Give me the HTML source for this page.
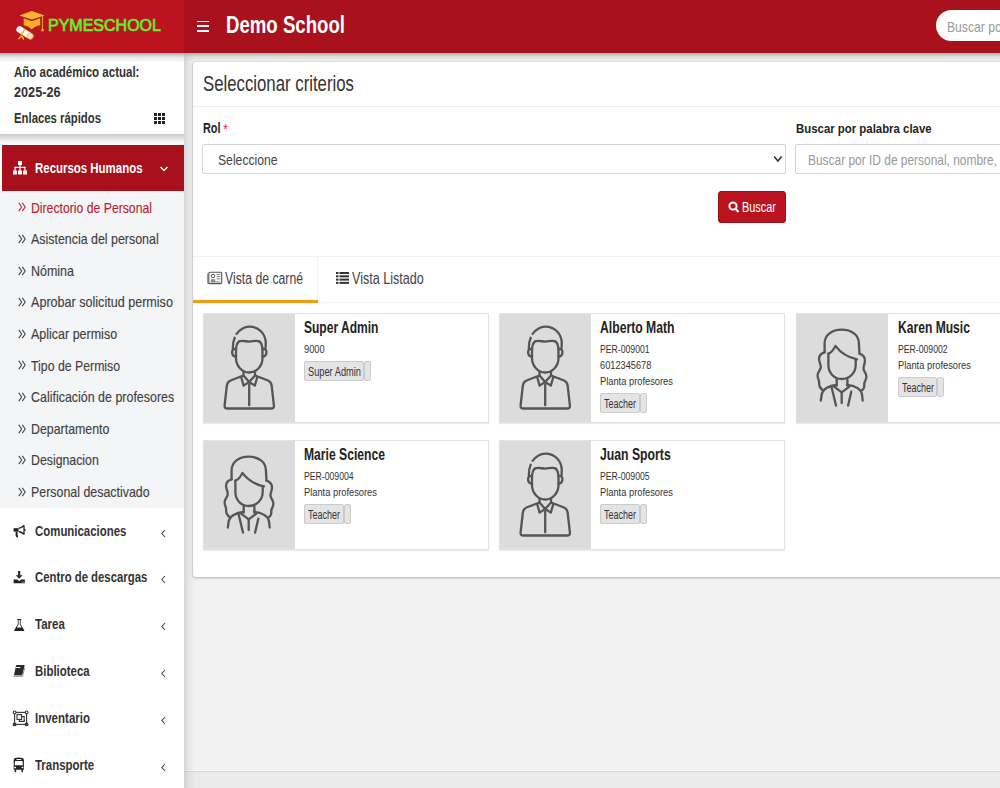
<!DOCTYPE html>
<html><head><meta charset="utf-8"><style>
html,body{margin:0;padding:0;width:1000px;height:788px;overflow:hidden;background:#f1f1f1;position:relative;font-family:"Liberation Sans",sans-serif}
.t{position:absolute;white-space:nowrap;transform-origin:0 50%}
</style></head><body>
<div style="position:absolute;left:0;top:0;width:184px;height:53px;background:#bb1420"></div>
<div style="position:absolute;left:184px;top:0;width:816px;height:53px;background:#a9111c"></div>
<div style="position:absolute;left:0;top:53px;width:1000px;height:9px;z-index:5;background:linear-gradient(rgba(150,155,155,.75),rgba(190,190,190,.35) 45%,rgba(240,240,240,0))"></div>
<div class="t" style="left:48.3px;top:16.9px;font-size:17.4px;line-height:17.4px;color:#5ff22b;transform:scaleX(0.9202);-webkit-text-stroke:0.7px #5ff22b;">PYMESCHOOL</div>
<svg style="position:absolute;left:12px;top:6px" width="40" height="40" viewBox="0 0 40 40">
<path d="M11.7,12.2 L19.8,15.2 L28.2,12.2 L28.2,19.3 C25,19.8 21.5,21.3 19.8,23.4 C18,21.3 14.5,19.8 11.7,19.3 Z" fill="#f6b024"/>
<polygon points="7.2,9.4 19.8,5 32.6,9.4 19.8,13.6" fill="#f8b82c"/>
<line x1="30.5" y1="9.8" x2="30.5" y2="21.8" stroke="#e8a030" stroke-width="1"/>
<path d="M28.9,25.2 L30.5,20.8 L32.1,25.2 Z" fill="#f8b82c"/>
<g transform="rotate(32 12.5 26.5)">
<rect x="3.5" y="23.2" width="17.5" height="6.6" rx="3.3" fill="#fffaf0"/>
<circle cx="19.3" cy="26.5" r="3" fill="#fbe6bd" stroke="#f0b040" stroke-width="0.8"/>
<rect x="10.2" y="23" width="1.6" height="7" fill="#f6b024"/>
</g>
<path d="M9.2,30 L6.8,32.8 M9.8,30.2 L11.5,33" stroke="#f6b024" stroke-width="1.5" stroke-linecap="round"/>
</svg>
<div style="position:absolute;left:197px;top:20.6px;width:12px;height:1.8px;background:#fff"></div>
<div style="position:absolute;left:197px;top:25.4px;width:12px;height:1.8px;background:#fff"></div>
<div style="position:absolute;left:197px;top:30.2px;width:12px;height:1.8px;background:#fff"></div>
<div class="t" style="left:225.5px;top:14.4px;font-size:23px;line-height:23px;color:#fff;font-weight:bold;transform:scaleX(0.8097);">Demo School</div>
<div style="position:absolute;left:936px;top:10px;width:120px;height:31px;border-radius:16px;background:#fff"></div>
<div class="t" style="left:947.3px;top:18.6px;font-size:15px;line-height:15px;color:#999;transform:scaleX(0.8097);">Buscar por</div>
<div style="position:absolute;left:0;top:53px;width:184px;height:735px;background:#fff"></div>
<div style="position:absolute;left:0;top:134px;width:184px;height:11px;background:#f7f8f9"></div>
<div style="position:absolute;left:0;top:134px;width:184px;height:8px;background:linear-gradient(#c9c9c9,rgba(247,248,249,0))"></div>
<div class="t" style="left:14.0px;top:64.9px;font-size:14.6px;line-height:14.6px;color:#333;font-weight:bold;transform:scaleX(0.7892);">Año académico actual:</div>
<div class="t" style="left:14.0px;top:84.9px;font-size:14.6px;line-height:14.6px;color:#333;font-weight:bold;transform:scaleX(0.8678);">2025-26</div>
<div class="t" style="left:14.0px;top:111.0px;font-size:14.6px;line-height:14.6px;color:#333;font-weight:bold;transform:scaleX(0.7769);">Enlaces rápidos</div>
<div style="position:absolute;left:153.5px;top:113.0px;width:3.4px;height:3.2px;background:#222"></div>
<div style="position:absolute;left:153.5px;top:117.0px;width:3.4px;height:3.2px;background:#222"></div>
<div style="position:absolute;left:153.5px;top:121.0px;width:3.4px;height:3.2px;background:#222"></div>
<div style="position:absolute;left:157.8px;top:113.0px;width:3.4px;height:3.2px;background:#222"></div>
<div style="position:absolute;left:157.8px;top:117.0px;width:3.4px;height:3.2px;background:#222"></div>
<div style="position:absolute;left:157.8px;top:121.0px;width:3.4px;height:3.2px;background:#222"></div>
<div style="position:absolute;left:162.1px;top:113.0px;width:3.4px;height:3.2px;background:#222"></div>
<div style="position:absolute;left:162.1px;top:117.0px;width:3.4px;height:3.2px;background:#222"></div>
<div style="position:absolute;left:162.1px;top:121.0px;width:3.4px;height:3.2px;background:#222"></div>
<div style="position:absolute;left:2px;top:145px;width:182px;height:45.5px;background:#a8101c"></div>
<svg style="position:absolute;left:13px;top:161px" width="14" height="14" viewBox="0 0 14 14" fill="#fff">
<rect x="5" y="0" width="4" height="4"/><rect x="6.4" y="3.5" width="1.2" height="3"/><rect x="1.5" y="5.8" width="11" height="1.2"/>
<rect x="1.5" y="5.8" width="1.2" height="4"/><rect x="11.3" y="5.8" width="1.2" height="4"/><rect x="6.4" y="5.8" width="1.2" height="4"/>
<rect x="0" y="9.5" width="4" height="4"/><rect x="5" y="9.5" width="4" height="4"/><rect x="10" y="9.5" width="4" height="4"/></svg>
<div class="t" style="left:35.0px;top:161.3px;font-size:14.5px;line-height:14.5px;color:#fff;font-weight:bold;transform:scaleX(0.7894);">Recursos Humanos</div>
<svg style="position:absolute;left:159px;top:165px" width="10" height="8" viewBox="0 0 10 8"><path d="M1.5,2 L5,5.5 L8.5,2" stroke="#fff" stroke-width="1.5" fill="none"/></svg>
<div style="position:absolute;left:0;top:190.5px;width:184px;height:317.5px;background:#f4f5f7"></div>
<svg style="position:absolute;left:18px;top:202.3px" width="8" height="10" viewBox="0 0 8 10"><path d="M0.8,0.9 L3.7,5 L0.8,9.1 M4.3,0.9 L7.2,5 L4.3,9.1" stroke="#b91e2d" stroke-width="1.05" fill="none"/></svg>
<div class="t" style="left:31.4px;top:199.6px;font-size:15px;line-height:15px;color:#b91e2d;transform:scaleX(0.8153);-webkit-text-stroke:0.15px #b91e2d;">Directorio de Personal</div>
<svg style="position:absolute;left:18px;top:233.9px" width="8" height="10" viewBox="0 0 8 10"><path d="M0.8,0.9 L3.7,5 L0.8,9.1 M4.3,0.9 L7.2,5 L4.3,9.1" stroke="#3f3f3f" stroke-width="1.05" fill="none"/></svg>
<div class="t" style="left:31.4px;top:231.2px;font-size:15px;line-height:15px;color:#3f3f3f;transform:scaleX(0.8278);-webkit-text-stroke:0.15px #3f3f3f;">Asistencia del personal</div>
<svg style="position:absolute;left:18px;top:265.5px" width="8" height="10" viewBox="0 0 8 10"><path d="M0.8,0.9 L3.7,5 L0.8,9.1 M4.3,0.9 L7.2,5 L4.3,9.1" stroke="#3f3f3f" stroke-width="1.05" fill="none"/></svg>
<div class="t" style="left:31.4px;top:262.8px;font-size:15px;line-height:15px;color:#3f3f3f;transform:scaleX(0.8300);-webkit-text-stroke:0.15px #3f3f3f;">Nómina</div>
<svg style="position:absolute;left:18px;top:297.1px" width="8" height="10" viewBox="0 0 8 10"><path d="M0.8,0.9 L3.7,5 L0.8,9.1 M4.3,0.9 L7.2,5 L4.3,9.1" stroke="#3f3f3f" stroke-width="1.05" fill="none"/></svg>
<div class="t" style="left:31.4px;top:294.4px;font-size:15px;line-height:15px;color:#3f3f3f;transform:scaleX(0.8384);-webkit-text-stroke:0.15px #3f3f3f;">Aprobar solicitud permiso</div>
<svg style="position:absolute;left:18px;top:328.7px" width="8" height="10" viewBox="0 0 8 10"><path d="M0.8,0.9 L3.7,5 L0.8,9.1 M4.3,0.9 L7.2,5 L4.3,9.1" stroke="#3f3f3f" stroke-width="1.05" fill="none"/></svg>
<div class="t" style="left:31.4px;top:326.0px;font-size:15px;line-height:15px;color:#3f3f3f;transform:scaleX(0.8329);-webkit-text-stroke:0.15px #3f3f3f;">Aplicar permiso</div>
<svg style="position:absolute;left:18px;top:360.3px" width="8" height="10" viewBox="0 0 8 10"><path d="M0.8,0.9 L3.7,5 L0.8,9.1 M4.3,0.9 L7.2,5 L4.3,9.1" stroke="#3f3f3f" stroke-width="1.05" fill="none"/></svg>
<div class="t" style="left:31.4px;top:357.6px;font-size:15px;line-height:15px;color:#3f3f3f;transform:scaleX(0.8200);-webkit-text-stroke:0.15px #3f3f3f;">Tipo de Permiso</div>
<svg style="position:absolute;left:18px;top:391.9px" width="8" height="10" viewBox="0 0 8 10"><path d="M0.8,0.9 L3.7,5 L0.8,9.1 M4.3,0.9 L7.2,5 L4.3,9.1" stroke="#3f3f3f" stroke-width="1.05" fill="none"/></svg>
<div class="t" style="left:31.4px;top:389.2px;font-size:15px;line-height:15px;color:#3f3f3f;transform:scaleX(0.8297);-webkit-text-stroke:0.15px #3f3f3f;">Calificación de profesores</div>
<svg style="position:absolute;left:18px;top:423.5px" width="8" height="10" viewBox="0 0 8 10"><path d="M0.8,0.9 L3.7,5 L0.8,9.1 M4.3,0.9 L7.2,5 L4.3,9.1" stroke="#3f3f3f" stroke-width="1.05" fill="none"/></svg>
<div class="t" style="left:31.4px;top:420.8px;font-size:15px;line-height:15px;color:#3f3f3f;transform:scaleX(0.8248);-webkit-text-stroke:0.15px #3f3f3f;">Departamento</div>
<svg style="position:absolute;left:18px;top:455.1px" width="8" height="10" viewBox="0 0 8 10"><path d="M0.8,0.9 L3.7,5 L0.8,9.1 M4.3,0.9 L7.2,5 L4.3,9.1" stroke="#3f3f3f" stroke-width="1.05" fill="none"/></svg>
<div class="t" style="left:31.4px;top:452.4px;font-size:15px;line-height:15px;color:#3f3f3f;transform:scaleX(0.8213);-webkit-text-stroke:0.15px #3f3f3f;">Designacion</div>
<svg style="position:absolute;left:18px;top:486.7px" width="8" height="10" viewBox="0 0 8 10"><path d="M0.8,0.9 L3.7,5 L0.8,9.1 M4.3,0.9 L7.2,5 L4.3,9.1" stroke="#3f3f3f" stroke-width="1.05" fill="none"/></svg>
<div class="t" style="left:31.4px;top:484.0px;font-size:15px;line-height:15px;color:#3f3f3f;transform:scaleX(0.8269);-webkit-text-stroke:0.15px #3f3f3f;">Personal desactivado</div>
<svg style="position:absolute;left:8px;top:518.9px" width="24" height="24" viewBox="0 0 24 24"><rect x="5.6" y="9.2" width="5" height="3.4" fill="#222"/><path d="M10.8,9.4 C13,9 14.5,8 16,6.6 L16,15.2 C14.5,13.8 13,12.9 10.8,12.5" stroke="#222" stroke-width="1.3" fill="none" stroke-linejoin="round"/><rect x="16.2" y="10" width="1.4" height="1.7" fill="#222"/><path d="M8.6,12.5 L8.6,16.4 C8.6,17.2 9.2,17.5 10,17.5" stroke="#222" stroke-width="2" fill="none"/></svg>
<div class="t" style="left:35.0px;top:523.6px;font-size:14.8px;line-height:14.8px;color:#333;font-weight:bold;transform:scaleX(0.7718);">Comunicaciones</div>
<svg style="position:absolute;left:160px;top:528.6px" width="7" height="9" viewBox="0 0 7 9"><path d="M5,1 L1.8,4.5 L5,8" stroke="#444" stroke-width="1.1" fill="none"/></svg>
<svg style="position:absolute;left:8px;top:565.7px" width="24" height="24" viewBox="0 0 24 24"><rect x="10.1" y="5" width="2.1" height="4.8" fill="#222"/><path d="M7.8,9.2 L14.6,9.2 L11.2,12.8 Z" fill="#222"/><path d="M5.6,13.4 L9.4,13.4 L11.2,15.2 L13,13.4 L16.8,13.4 L16.8,17.2 L5.6,17.2 Z" fill="#222"/><rect x="13.5" y="15.6" width="2.6" height="0.9" fill="#999"/></svg>
<div class="t" style="left:35.0px;top:570.4px;font-size:14.8px;line-height:14.8px;color:#333;font-weight:bold;transform:scaleX(0.7670);">Centro de descargas</div>
<svg style="position:absolute;left:160px;top:575.4px" width="7" height="9" viewBox="0 0 7 9"><path d="M5,1 L1.8,4.5 L5,8" stroke="#444" stroke-width="1.1" fill="none"/></svg>
<svg style="position:absolute;left:8px;top:612.5px" width="24" height="24" viewBox="0 0 24 24"><path fill-rule="evenodd" d="M9.2,5.9 L13.3,5.9 L13.3,7 L12.6,7 L12.6,11 L16.2,17.2 C16.5,17.8 16.1,18.1 15.5,18.1 L6.9,18.1 C6.3,18.1 5.9,17.8 6.2,17.2 L9.8,11 L9.8,7 L9.2,7 Z M10.6,7 L11.8,7 L11.8,11.3 L13.7,14.6 L8.7,14.6 L10.6,11.3 Z" fill="#222"/></svg>
<div class="t" style="left:35.0px;top:617.2px;font-size:14.8px;line-height:14.8px;color:#333;font-weight:bold;transform:scaleX(0.7761);">Tarea</div>
<svg style="position:absolute;left:160px;top:622.2px" width="7" height="9" viewBox="0 0 7 9"><path d="M5,1 L1.8,4.5 L5,8" stroke="#444" stroke-width="1.1" fill="none"/></svg>
<svg style="position:absolute;left:8px;top:659.3px" width="24" height="24" viewBox="0 0 24 24"><path d="M8.6,6 L16,6 C16.5,6 16.7,6.4 16.6,6.9 L14.3,16 L6,16 L8,6.8 C8.1,6.3 8.3,6 8.6,6 Z" fill="#2a2a2a"/><rect x="9.5" y="8" width="4.6" height="1.1" fill="#fff" transform="skewX(-12)" /><path d="M5.6,16.2 L14.3,16.2 L14,17.8 L5.8,17.8 C5.3,17.8 5.2,17.4 5.3,17 Z" fill="#888"/><path d="M16.6,9 L14.5,17.6" stroke="#999" stroke-width="1"/></svg>
<div class="t" style="left:35.0px;top:664.0px;font-size:14.8px;line-height:14.8px;color:#333;font-weight:bold;transform:scaleX(0.7734);">Biblioteca</div>
<svg style="position:absolute;left:160px;top:669.0px" width="7" height="9" viewBox="0 0 7 9"><path d="M5,1 L1.8,4.5 L5,8" stroke="#444" stroke-width="1.1" fill="none"/></svg>
<svg style="position:absolute;left:8px;top:706.1px" width="24" height="24" viewBox="0 0 24 24"><rect x="6.6" y="6.4" width="12" height="12" stroke="#333" stroke-width="1.1" fill="none"/><circle cx="6.6" cy="6.4" r="1.4" fill="#fff" stroke="#333" stroke-width="1.1"/><circle cx="18.6" cy="6.4" r="1.4" fill="#fff" stroke="#333" stroke-width="1.1"/><circle cx="6.6" cy="18.4" r="1.4" fill="#444" stroke="#333" stroke-width="1.1"/><circle cx="18.6" cy="18.4" r="1.4" fill="#444" stroke="#333" stroke-width="1.1"/><rect x="9" y="8.6" width="4.6" height="4.8" stroke="#333" stroke-width="1.1" fill="none"/><path d="M13.8,10.6 L16.2,10.6 L16.2,15.4 L11.4,15.4 L11.4,13.6" stroke="#333" stroke-width="1.1" fill="none"/></svg>
<div class="t" style="left:35.0px;top:710.8px;font-size:14.8px;line-height:14.8px;color:#333;font-weight:bold;transform:scaleX(0.7776);">Inventario</div>
<svg style="position:absolute;left:160px;top:715.8px" width="7" height="9" viewBox="0 0 7 9"><path d="M5,1 L1.8,4.5 L5,8" stroke="#444" stroke-width="1.1" fill="none"/></svg>
<svg style="position:absolute;left:8px;top:752.9px" width="24" height="24" viewBox="0 0 24 24"><path fill-rule="evenodd" d="M5.7,7 C5.7,5.3 8,4.6 10.8,4.6 C13.6,4.6 15.9,5.3 15.9,7 L15.9,16.8 L15,16.8 L15,18.6 C15,19.3 13.4,19.3 13.4,18.6 L13.4,16.8 L8.2,16.8 L8.2,18.6 C8.2,19.3 6.6,19.3 6.6,18.6 L6.6,16.8 L5.7,16.8 Z M7.1,8 L14.5,8 L14.9,12.2 L6.7,12.2 Z M6.4,13.8 L8,13.8 L8,15.3 L6.4,15.3 Z M13.6,13.8 L15.2,13.8 L15.2,15.3 L13.6,15.3 Z" fill="#222"/><rect x="8.4" y="6.1" width="4.8" height="0.9" fill="#fff"/></svg>
<div class="t" style="left:35.0px;top:757.6px;font-size:14.8px;line-height:14.8px;color:#333;font-weight:bold;transform:scaleX(0.7740);">Transporte</div>
<svg style="position:absolute;left:160px;top:762.6px" width="7" height="9" viewBox="0 0 7 9"><path d="M5,1 L1.8,4.5 L5,8" stroke="#444" stroke-width="1.1" fill="none"/></svg>
<div style="position:absolute;left:192px;top:53px;width:808px;height:718px;background:#f2f2f2"></div>
<div style="position:absolute;left:184px;top:770px;width:816px;height:1px;background:#f8f8f8"></div>
<div style="position:absolute;left:184px;top:771px;width:816px;height:17px;background:#ebebeb;border-top:1.5px solid #d5d8de"></div>
<div style="position:absolute;left:184px;top:53px;width:12px;height:735px;z-index:4;background:linear-gradient(90deg,rgba(0,0,0,.11),rgba(0,0,0,.04) 45%,rgba(0,0,0,0))"></div>
<div style="position:absolute;left:193.3px;top:62.4px;width:830px;height:515px;background:#fff;border-radius:3px;box-shadow:0 0 0 1px rgba(0,0,0,.05),0 1px 3px rgba(0,0,0,.22)"></div>
<div class="t" style="left:203.0px;top:72.5px;font-size:21.6px;line-height:21.6px;color:#333;transform:scaleX(0.7764);">Seleccionar criterios</div>
<div style="position:absolute;left:193px;top:106px;width:807px;height:1px;background:#f0f0f0"></div>
<div class="t" style="left:202.8px;top:121.0px;font-size:14.5px;line-height:14.5px;color:#222;font-weight:bold;transform:scaleX(0.7492);">Rol</div>
<div class="t" style="left:223.0px;top:121.1px;font-size:15px;line-height:15px;color:#ee2b47;transform:scaleX(0.8700);">*</div>
<div style="position:absolute;left:202px;top:144px;width:582px;height:28px;border:1px solid #d4d4d4;border-radius:2px;background:#fff"></div>
<div class="t" style="left:218.0px;top:152.7px;font-size:14.8px;line-height:14.8px;color:#444;transform:scaleX(0.8231);">Seleccione</div>
<svg style="position:absolute;left:773px;top:155px" width="10" height="8" viewBox="0 0 10 8"><path d="M1.2,1.6 L4.9,5.9 L8.6,1.6" stroke="#333" stroke-width="1.6" fill="none"/></svg>
<div class="t" style="left:795.8px;top:121.7px;font-size:13.5px;line-height:13.5px;color:#222;font-weight:bold;transform:scaleX(0.8444);">Buscar por palabra clave</div>
<div style="position:absolute;left:795px;top:144px;width:300px;height:28px;border:1px solid #d4d4d4;border-radius:2px;background:#fff"></div>
<div class="t" style="left:807.5px;top:151.9px;font-size:15px;line-height:15px;color:#999;transform:scaleX(0.7954);">Buscar por ID de personal, nombre, correo</div>
<div style="position:absolute;left:718px;top:191px;width:66px;height:30px;background:#b9141f;border:1px solid #9c0e18;border-radius:3px"></div>
<svg style="position:absolute;left:728px;top:201px" width="12" height="13" viewBox="0 0 12 13"><circle cx="5" cy="5" r="3.6" stroke="#fff" stroke-width="2" fill="none"/><path d="M7.5,7.8 L10.5,11" stroke="#fff" stroke-width="2.2"/></svg>
<div class="t" style="left:742.0px;top:199.7px;font-size:14.3px;line-height:14.3px;color:#fff;transform:scaleX(0.7639);">Buscar</div>
<div style="position:absolute;left:193px;top:256px;width:807px;height:1px;background:#f2f2f2"></div>
<div style="position:absolute;left:193px;top:302px;width:807px;height:1px;background:#f2f2f2"></div>
<div style="position:absolute;left:317px;top:257px;width:1px;height:45px;background:#f2f2f2"></div>
<div style="position:absolute;left:193px;top:300px;width:125px;height:3px;background:#f39c12"></div>
<svg style="position:absolute;left:207px;top:271px" width="16" height="14" viewBox="0 0 16 14">
<rect x="1.8" y="1.2" width="12.9" height="11.4" rx="1" stroke="#555" stroke-width="1.1" fill="#fafafa"/>
<path d="M0.8,2.4 L0.8,12.4 L2,12.6" stroke="#6a6a6a" stroke-width="1" fill="none"/>
<circle cx="6" cy="5" r="1.7" stroke="#555" stroke-width="1" fill="#fff"/>
<rect x="3.9" y="8.2" width="4.3" height="2.6" fill="#8a8a8a"/>
<path d="M9.6,3.4 L13.2,3.4 M9.6,5.6 L13.2,5.6 M9.6,7.8 L13.2,7.8 M3.8,11 L13.2,11" stroke="#777" stroke-width="0.9"/>
</svg>
<div class="t" style="left:224.8px;top:270.7px;font-size:16px;line-height:16px;color:#444;transform:scaleX(0.7647);">Vista de carné</div>
<svg style="position:absolute;left:336px;top:272px" width="13" height="12" viewBox="0 0 13 12" fill="#333">
<rect x="0" y="0" width="2.5" height="2"/><rect x="3.5" y="0" width="9.5" height="2"/>
<rect x="0" y="3.3" width="2.5" height="2"/><rect x="3.5" y="3.3" width="9.5" height="2"/>
<rect x="0" y="6.6" width="2.5" height="2"/><rect x="3.5" y="6.6" width="9.5" height="2"/>
<rect x="0" y="9.9" width="2.5" height="2"/><rect x="3.5" y="9.9" width="9.5" height="2"/></svg>
<div class="t" style="left:352.2px;top:270.7px;font-size:16px;line-height:16px;color:#444;transform:scaleX(0.7862);">Vista Listado</div>
<div style="position:absolute;left:202.6px;top:313.2px;width:284.6px;height:108.2px;background:#fff;border:1px solid #e3e3e3;box-shadow:0 1px 1px rgba(0,0,0,.08)"></div>
<div style="position:absolute;left:203.6px;top:314.2px;width:91.3px;height:108.2px;background:#dcdcdc"></div>
<svg style="position:absolute;left:215.0px;top:318.0px" width="70" height="100" viewBox="0 0 70 100" fill="none" stroke="#555" stroke-width="2.3" stroke-linecap="round" stroke-linejoin="round">
<path d="M21.6,15.9 C25,11.5 29.5,8.6 34.2,8.6 C44,8.6 50.8,16 50.8,25.4 L50.5,30.5"/>
<path d="M19.7,19.7 C18.4,22.5 17.8,26 17.8,30.4"/>
<path d="M24,23.5 C27,22 31,23.6 34.2,23.6 C37.5,23.6 41.5,22 44.5,23.5"/>
<path d="M24,23.5 C21.8,25 21,28.5 21,33 L21,40 C21,48 27,54.5 34.2,54.5 C41.5,54.5 47.5,48 47.5,40 L47.5,33 C47.5,28.5 46.7,25 44.5,23.5"/>
<path d="M21,31 C18.5,30.3 16.8,32 17.1,34.8 C17.4,37.3 19,38.5 21,38.5"/>
<path d="M47.5,31 C50,30.3 51.7,32 51.4,34.8 C51.1,37.3 49.5,38.5 47.5,38.5"/>
<path d="M28.5,54 L28.5,57.5 L34.2,64 L40,57.5 L40,54"/>
<path d="M26.3,59.5 L28.6,67.6 L34.2,64 L39.8,67.6 L42.2,59.5"/>
<path d="M28.5,57.5 L15.5,62.5 C13,63.5 12,65.5 11.8,68 L9.6,87.5 C9.4,89.7 10.3,90.5 12.5,90.5 L56,90.5 C58.2,90.5 59.1,89.7 58.9,87.5 L56.7,68 C56.5,65.5 55.5,63.5 53,62.5 L40,57.5"/>
<path d="M34.2,66.5 L34.2,87.3"/>
</svg>
<div class="t" style="left:304.3px;top:319.2px;font-size:16.3px;line-height:16.3px;color:#222;font-weight:bold;transform:scaleX(0.7389);">Super Admin</div>
<div class="t" style="left:304.3px;top:343.7px;font-size:11.5px;line-height:11.5px;color:#333;transform:scaleX(0.8052);">9000</div>
<div style="position:absolute;left:304.3px;top:360.5px;width:57.6px;height:18.5px;background:#e4e4e4;border:1px solid #cbcbcb;border-radius:2px"></div>
<div style="position:absolute;left:364.2px;top:360.5px;width:4.8px;height:18.5px;background:#e4e4e4;border:1px solid #cbcbcb;border-radius:2px"></div>
<div class="t" style="left:308.3px;top:365.7px;font-size:12px;line-height:12px;color:#333;transform:scaleX(0.7714);">Super Admin</div>
<div style="position:absolute;left:498.7px;top:313.2px;width:284.6px;height:108.2px;background:#fff;border:1px solid #e3e3e3;box-shadow:0 1px 1px rgba(0,0,0,.08)"></div>
<div style="position:absolute;left:499.7px;top:314.2px;width:91.3px;height:108.2px;background:#dcdcdc"></div>
<svg style="position:absolute;left:511.1px;top:318.0px" width="70" height="100" viewBox="0 0 70 100" fill="none" stroke="#555" stroke-width="2.3" stroke-linecap="round" stroke-linejoin="round">
<path d="M21.6,15.9 C25,11.5 29.5,8.6 34.2,8.6 C44,8.6 50.8,16 50.8,25.4 L50.5,30.5"/>
<path d="M19.7,19.7 C18.4,22.5 17.8,26 17.8,30.4"/>
<path d="M24,23.5 C27,22 31,23.6 34.2,23.6 C37.5,23.6 41.5,22 44.5,23.5"/>
<path d="M24,23.5 C21.8,25 21,28.5 21,33 L21,40 C21,48 27,54.5 34.2,54.5 C41.5,54.5 47.5,48 47.5,40 L47.5,33 C47.5,28.5 46.7,25 44.5,23.5"/>
<path d="M21,31 C18.5,30.3 16.8,32 17.1,34.8 C17.4,37.3 19,38.5 21,38.5"/>
<path d="M47.5,31 C50,30.3 51.7,32 51.4,34.8 C51.1,37.3 49.5,38.5 47.5,38.5"/>
<path d="M28.5,54 L28.5,57.5 L34.2,64 L40,57.5 L40,54"/>
<path d="M26.3,59.5 L28.6,67.6 L34.2,64 L39.8,67.6 L42.2,59.5"/>
<path d="M28.5,57.5 L15.5,62.5 C13,63.5 12,65.5 11.8,68 L9.6,87.5 C9.4,89.7 10.3,90.5 12.5,90.5 L56,90.5 C58.2,90.5 59.1,89.7 58.9,87.5 L56.7,68 C56.5,65.5 55.5,63.5 53,62.5 L40,57.5"/>
<path d="M34.2,66.5 L34.2,87.3"/>
</svg>
<div class="t" style="left:600.4px;top:319.2px;font-size:16.3px;line-height:16.3px;color:#222;font-weight:bold;transform:scaleX(0.7489);">Alberto Math</div>
<div class="t" style="left:600.4px;top:343.7px;font-size:11.5px;line-height:11.5px;color:#333;transform:scaleX(0.7532);">PER-009001</div>
<div class="t" style="left:600.4px;top:359.7px;font-size:11.5px;line-height:11.5px;color:#333;transform:scaleX(0.8021);">6012345678</div>
<div class="t" style="left:600.4px;top:375.7px;font-size:11.5px;line-height:11.5px;color:#333;transform:scaleX(0.8088);">Planta profesores</div>
<div style="position:absolute;left:600.4px;top:392.5px;width:37.3px;height:18.5px;background:#e4e4e4;border:1px solid #cbcbcb;border-radius:2px"></div>
<div style="position:absolute;left:640.0px;top:392.5px;width:4.8px;height:18.5px;background:#e4e4e4;border:1px solid #cbcbcb;border-radius:2px"></div>
<div class="t" style="left:604.4px;top:397.7px;font-size:12px;line-height:12px;color:#333;transform:scaleX(0.7495);">Teacher</div>
<div style="position:absolute;left:795.9px;top:313.2px;width:284.6px;height:108.2px;background:#fff;border:1px solid #e3e3e3;box-shadow:0 1px 1px rgba(0,0,0,.08)"></div>
<div style="position:absolute;left:796.9px;top:314.2px;width:91.3px;height:108.2px;background:#dcdcdc"></div>
<svg style="position:absolute;left:803.3px;top:318.0px" width="80" height="100" viewBox="0 0 80 100" fill="none" stroke="#555" stroke-width="2.3" stroke-linecap="round" stroke-linejoin="round">
<path d="M21.6,34.3 L21.6,25.4 C21.6,17 29,11.7 38.6,11.7 C48.5,11.7 55.9,17 55.9,25.4 L56.5,35.6"/>
<path d="M21.6,34.3 C17.5,35.5 15.8,38 16.1,41.5 C16.4,45 18.2,47 17.7,49.8 C17.2,52.5 14.5,54 14.6,57.5 C14.7,61 16.3,62 16.1,64.5 C15.9,67.5 16.5,70 20.3,72.6"/>
<path d="M56.5,35.6 C60.8,37 62.3,40 61.9,43.5 C61.5,47 60,48.5 60.6,51.2 C61.2,54 63.6,55.5 63.4,59 C63.2,62.5 61,63.7 61.3,66.3 C61.6,69 61.5,70.5 58.5,72.6"/>
<path d="M25.4,35.6 L25.4,47 C25.4,55 31,61 38.7,61 C46.5,61 52.7,55 52.7,47 L52.7,41.6"/>
<path d="M25.4,35.6 C28.5,34.5 31,31 32.4,27.9 C37,34 45,39.5 54,41.3"/>
<path d="M33.7,61.3 L33.7,67.5 M44.4,61.3 L44.4,67.5"/>
<path d="M31.1,68.6 L38.7,74.3 L46.3,68.6"/>
<path d="M33.5,67 C26,67.5 19.5,71 18.6,77 L17.8,82.5"/>
<path d="M44,67 C52,67.5 58.3,71 59.1,77 L59.7,82.5"/>
<path d="M28.6,69.2 L33,87.6"/><path d="M48.3,73.7 L45.1,87.6"/>
<path d="M38.7,74.9 L38.7,85.1"/>
</svg>
<div class="t" style="left:897.6px;top:319.2px;font-size:16.3px;line-height:16.3px;color:#222;font-weight:bold;transform:scaleX(0.7428);">Karen Music</div>
<div class="t" style="left:897.6px;top:343.7px;font-size:11.5px;line-height:11.5px;color:#333;transform:scaleX(0.7532);">PER-009002</div>
<div class="t" style="left:897.6px;top:359.7px;font-size:11.5px;line-height:11.5px;color:#333;transform:scaleX(0.8088);">Planta profesores</div>
<div style="position:absolute;left:897.6px;top:376.5px;width:37.3px;height:18.5px;background:#e4e4e4;border:1px solid #cbcbcb;border-radius:2px"></div>
<div style="position:absolute;left:937.2px;top:376.5px;width:4.8px;height:18.5px;background:#e4e4e4;border:1px solid #cbcbcb;border-radius:2px"></div>
<div class="t" style="left:901.6px;top:381.7px;font-size:12px;line-height:12px;color:#333;transform:scaleX(0.7495);">Teacher</div>
<div style="position:absolute;left:202.6px;top:440.2px;width:284.6px;height:108.2px;background:#fff;border:1px solid #e3e3e3;box-shadow:0 1px 1px rgba(0,0,0,.08)"></div>
<div style="position:absolute;left:203.6px;top:441.2px;width:91.3px;height:108.2px;background:#dcdcdc"></div>
<svg style="position:absolute;left:210.0px;top:445.0px" width="80" height="100" viewBox="0 0 80 100" fill="none" stroke="#555" stroke-width="2.3" stroke-linecap="round" stroke-linejoin="round">
<path d="M21.6,34.3 L21.6,25.4 C21.6,17 29,11.7 38.6,11.7 C48.5,11.7 55.9,17 55.9,25.4 L56.5,35.6"/>
<path d="M21.6,34.3 C17.5,35.5 15.8,38 16.1,41.5 C16.4,45 18.2,47 17.7,49.8 C17.2,52.5 14.5,54 14.6,57.5 C14.7,61 16.3,62 16.1,64.5 C15.9,67.5 16.5,70 20.3,72.6"/>
<path d="M56.5,35.6 C60.8,37 62.3,40 61.9,43.5 C61.5,47 60,48.5 60.6,51.2 C61.2,54 63.6,55.5 63.4,59 C63.2,62.5 61,63.7 61.3,66.3 C61.6,69 61.5,70.5 58.5,72.6"/>
<path d="M25.4,35.6 L25.4,47 C25.4,55 31,61 38.7,61 C46.5,61 52.7,55 52.7,47 L52.7,41.6"/>
<path d="M25.4,35.6 C28.5,34.5 31,31 32.4,27.9 C37,34 45,39.5 54,41.3"/>
<path d="M33.7,61.3 L33.7,67.5 M44.4,61.3 L44.4,67.5"/>
<path d="M31.1,68.6 L38.7,74.3 L46.3,68.6"/>
<path d="M33.5,67 C26,67.5 19.5,71 18.6,77 L17.8,82.5"/>
<path d="M44,67 C52,67.5 58.3,71 59.1,77 L59.7,82.5"/>
<path d="M28.6,69.2 L33,87.6"/><path d="M48.3,73.7 L45.1,87.6"/>
<path d="M38.7,74.9 L38.7,85.1"/>
</svg>
<div class="t" style="left:304.3px;top:446.2px;font-size:16.3px;line-height:16.3px;color:#222;font-weight:bold;transform:scaleX(0.7450);">Marie Science</div>
<div class="t" style="left:304.3px;top:470.7px;font-size:11.5px;line-height:11.5px;color:#333;transform:scaleX(0.7532);">PER-009004</div>
<div class="t" style="left:304.3px;top:486.7px;font-size:11.5px;line-height:11.5px;color:#333;transform:scaleX(0.8088);">Planta profesores</div>
<div style="position:absolute;left:304.3px;top:503.5px;width:37.3px;height:18.5px;background:#e4e4e4;border:1px solid #cbcbcb;border-radius:2px"></div>
<div style="position:absolute;left:343.9px;top:503.5px;width:4.8px;height:18.5px;background:#e4e4e4;border:1px solid #cbcbcb;border-radius:2px"></div>
<div class="t" style="left:308.3px;top:508.7px;font-size:12px;line-height:12px;color:#333;transform:scaleX(0.7495);">Teacher</div>
<div style="position:absolute;left:498.7px;top:440.2px;width:284.6px;height:108.2px;background:#fff;border:1px solid #e3e3e3;box-shadow:0 1px 1px rgba(0,0,0,.08)"></div>
<div style="position:absolute;left:499.7px;top:441.2px;width:91.3px;height:108.2px;background:#dcdcdc"></div>
<svg style="position:absolute;left:511.1px;top:445.0px" width="70" height="100" viewBox="0 0 70 100" fill="none" stroke="#555" stroke-width="2.3" stroke-linecap="round" stroke-linejoin="round">
<path d="M21.6,15.9 C25,11.5 29.5,8.6 34.2,8.6 C44,8.6 50.8,16 50.8,25.4 L50.5,30.5"/>
<path d="M19.7,19.7 C18.4,22.5 17.8,26 17.8,30.4"/>
<path d="M24,23.5 C27,22 31,23.6 34.2,23.6 C37.5,23.6 41.5,22 44.5,23.5"/>
<path d="M24,23.5 C21.8,25 21,28.5 21,33 L21,40 C21,48 27,54.5 34.2,54.5 C41.5,54.5 47.5,48 47.5,40 L47.5,33 C47.5,28.5 46.7,25 44.5,23.5"/>
<path d="M21,31 C18.5,30.3 16.8,32 17.1,34.8 C17.4,37.3 19,38.5 21,38.5"/>
<path d="M47.5,31 C50,30.3 51.7,32 51.4,34.8 C51.1,37.3 49.5,38.5 47.5,38.5"/>
<path d="M28.5,54 L28.5,57.5 L34.2,64 L40,57.5 L40,54"/>
<path d="M26.3,59.5 L28.6,67.6 L34.2,64 L39.8,67.6 L42.2,59.5"/>
<path d="M28.5,57.5 L15.5,62.5 C13,63.5 12,65.5 11.8,68 L9.6,87.5 C9.4,89.7 10.3,90.5 12.5,90.5 L56,90.5 C58.2,90.5 59.1,89.7 58.9,87.5 L56.7,68 C56.5,65.5 55.5,63.5 53,62.5 L40,57.5"/>
<path d="M34.2,66.5 L34.2,87.3"/>
</svg>
<div class="t" style="left:600.4px;top:446.2px;font-size:16.3px;line-height:16.3px;color:#222;font-weight:bold;transform:scaleX(0.7516);">Juan Sports</div>
<div class="t" style="left:600.4px;top:470.7px;font-size:11.5px;line-height:11.5px;color:#333;transform:scaleX(0.7532);">PER-009005</div>
<div class="t" style="left:600.4px;top:486.7px;font-size:11.5px;line-height:11.5px;color:#333;transform:scaleX(0.8088);">Planta profesores</div>
<div style="position:absolute;left:600.4px;top:503.5px;width:37.3px;height:18.5px;background:#e4e4e4;border:1px solid #cbcbcb;border-radius:2px"></div>
<div style="position:absolute;left:640.0px;top:503.5px;width:4.8px;height:18.5px;background:#e4e4e4;border:1px solid #cbcbcb;border-radius:2px"></div>
<div class="t" style="left:604.4px;top:508.7px;font-size:12px;line-height:12px;color:#333;transform:scaleX(0.7495);">Teacher</div>
</body></html>
